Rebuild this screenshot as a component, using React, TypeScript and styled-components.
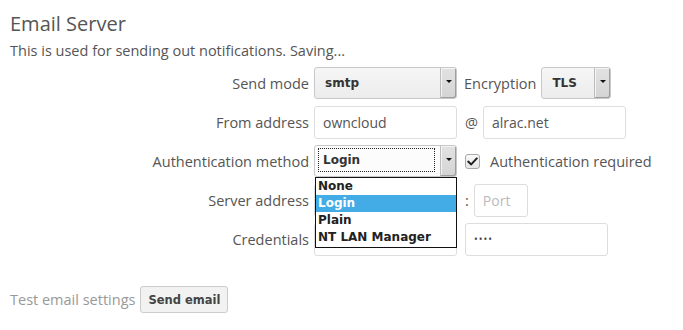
import styled, { createGlobalStyle } from 'styled-components';

const GlobalStyle = createGlobalStyle`
    html, body {
        margin: 0;
        padding: 0;
        background: #fff;
    }
    body {
        font-family: 'Open Sans', 'Liberation Sans', sans-serif;
        font-size: 14.5px;
        color: #555;
    }
`;

const Section = styled.div`
    padding: 9px 10px 0;
    width: 663px;
`;

const Title = styled.h2`
    margin: 0;
    font-size: 20px;
    font-weight: 400;
    line-height: 30px;
    color: #555;
`;

const Hint = styled.p`
    margin: 3px 0 7px;
    line-height: 18px;
`;

const Row = styled.div`
    display: flex;
    align-items: center;
    gap: 5px;
    height: 32px;
    margin-bottom: 7px;
    position: relative;
`;

const Label = styled.label`
    width: 299px;
    text-align: right;
    flex: none;
`;

const SideLabel = styled.span<{ $gap?: number }>`
    margin-left: ${p => p.$gap ?? 3}px;
`;

const Field = styled.div<{ $width: number; $gap?: number; $placeholder?: boolean }>`
    box-sizing: border-box;
    width: ${p => p.$width}px;
    height: 33px;
    margin-left: ${p => p.$gap ?? 0}px;
    border: 1px solid #ddd;
    border-radius: 3px;
    background: #fff;
    padding: 0 8px;
    display: flex;
    align-items: center;
    font-size: 14px;
    color: ${p => (p.$placeholder ? '#bbb' : '#555')};
    flex: none;
    overflow: hidden;
    white-space: nowrap;
`;

const Dots = styled.span`
    font-size: 10px;
    letter-spacing: 1px;
    color: #444;
`;

const Select = styled.div<{ $width: number; $focused?: boolean }>`
    box-sizing: border-box;
    width: ${p => p.$width}px;
    height: 32px;
    border: 1px solid #c8c8c8;
    border-radius: 3px;
    background: ${p => (p.$focused ? '#fcfcfc' : 'linear-gradient(#f6f6f6, #ececec)')};
    display: flex;
    align-items: stretch;
    flex: none;
    font-family: 'DejaVu Sans', sans-serif;
    font-weight: 700;
    font-size: 12px;
    color: #333;
`;

const SelectValue = styled.div<{ $focused?: boolean }>`
    flex: 1;
    display: flex;
    align-items: center;
    padding-left: 10px;
    ${p => p.$focused && `
        margin: 3px 6px 5px 4px;
        padding-left: 4px;
        outline: 1px dotted #222;
    `}
`;

const ArrowButton = styled.div`
    width: 15px;
    background: linear-gradient(#e2e2e2, #d4d4d4);
    border-left: 1px solid #bcbcbc;
    box-shadow: inset -1px -1px 0 #9e9e9e, inset 1px 1px 0 #f4f4f4;
    border-radius: 0 2px 2px 0;
    display: flex;
    align-items: center;
    justify-content: center;
    &::after {
        content: '';
        border-left: 3px solid transparent;
        border-right: 3px solid transparent;
        border-top: 3px solid #111;
        margin-top: -3px;
    }
`;

const Checkbox = styled.span`
    box-sizing: border-box;
    width: 15px;
    height: 15px;
    margin-left: 3px;
    border: 1px solid #a8a8a8;
    border-radius: 3px;
    background: linear-gradient(#fafafa, #e6e6e6);
    display: inline-flex;
    align-items: center;
    justify-content: center;
`;

const CheckText = styled.span`
    margin-left: 5px;
`;

const OptionList = styled.ul`
    position: absolute;
    left: 305px;
    top: 32px;
    box-sizing: border-box;
    width: 142px;
    margin: 0;
    padding: 0 0 1px;
    list-style: none;
    border: 1px solid #111;
    background: #fff;
    z-index: 2;
    font-family: 'DejaVu Sans', sans-serif;
    font-weight: 700;
    font-size: 12px;
    color: #222;
`;

const Option = styled.li<{ $active?: boolean }>`
    height: 17px;
    line-height: 17px;
    padding-left: 2px;
    background: ${p => (p.$active ? '#43abe6' : 'transparent')};
    color: ${p => (p.$active ? '#fff' : '#222')};
`;

const TestRow = styled.div`
    display: flex;
    align-items: center;
    gap: 5px;
    margin-top: 31px;
    color: #999;
`;

const Button = styled.button`
    box-sizing: border-box;
    height: 27px;
    padding: 0 7px;
    border: 1px solid #ccc;
    border-radius: 3px;
    background: #f2f2f2;
    font-family: 'DejaVu Sans', sans-serif;
    font-weight: 700;
    font-size: 11.5px;
    color: #444;
`;

const CheckMark = () => (
    <svg width="11" height="9" viewBox="0 0 11 9">
        <path d="M1.2 4.6 L4.2 7.4 L9.8 1.4" fill="none" stroke="#222" strokeWidth="2" strokeLinecap="round" strokeLinejoin="round" />
    </svg>
);

const App = () => (
    <>
        <GlobalStyle />
        <Section>
            <Title>Email Server</Title>
            <Hint>This is used for sending out notifications. Saving...</Hint>
            <Row>
                <Label>Send mode</Label>
                <Select $width={143}>
                    <SelectValue>smtp</SelectValue>
                    <ArrowButton />
                </Select>
                <SideLabel $gap={2}>Encryption</SideLabel>
                <Select $width={70}>
                    <SelectValue>TLS</SelectValue>
                    <ArrowButton />
                </Select>
            </Row>
            <Row>
                <Label>From address</Label>
                <Field $width={143}>owncloud</Field>
                <SideLabel $gap={3}>@</SideLabel>
                <Field $width={143}>alrac.net</Field>
            </Row>
            <Row>
                <Label>Authentication method</Label>
                <Select $width={143} $focused>
                    <SelectValue $focused>Login</SelectValue>
                    <ArrowButton />
                </Select>
                <Checkbox><CheckMark /></Checkbox>
                <CheckText>Authentication required</CheckText>
                <OptionList>
                    <Option>None</Option>
                    <Option $active>Login</Option>
                    <Option>Plain</Option>
                    <Option>NT LAN Manager</Option>
                </OptionList>
            </Row>
            <Row>
                <Label>Server address</Label>
                <Field $width={143} />
                <SideLabel $gap={3}>:</SideLabel>
                <Field $width={54} $placeholder>Port</Field>
            </Row>
            <Row>
                <Label>Credentials</Label>
                <Field $width={143} />
                <Field $width={143} $gap={3}><Dots>••••</Dots></Field>
            </Row>
            <TestRow>
                <span>Test email settings</span>
                <Button>Send email</Button>
            </TestRow>
        </Section>
    </>
);

export default App;
